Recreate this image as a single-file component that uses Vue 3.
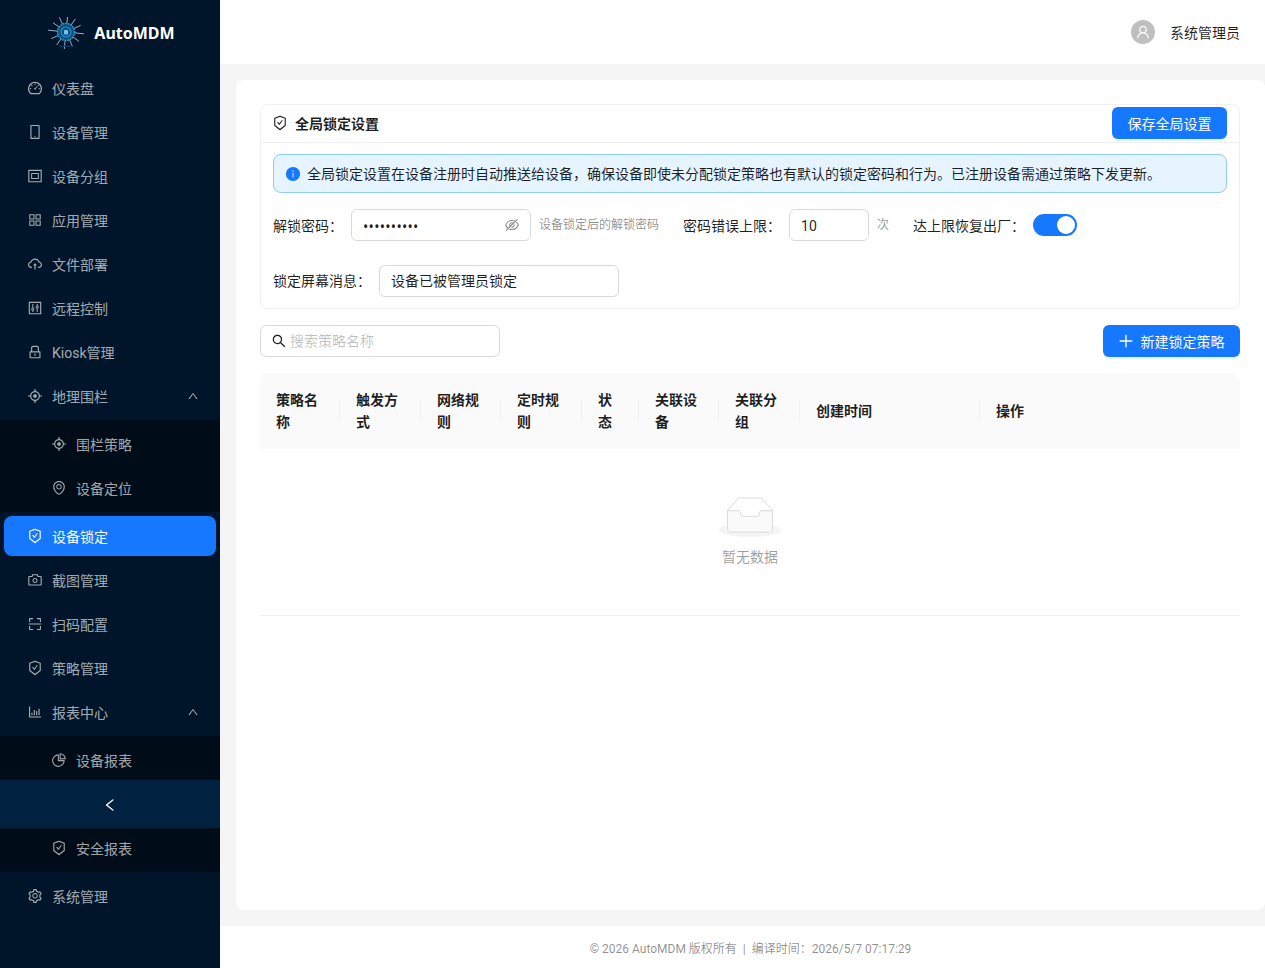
<script setup>
import { ref } from 'vue';

const icons = {
  dashboard: 'M924.8 385.6a446.7 446.7 0 00-96-142.4 446.7 446.7 0 00-142.4-96C631.1 123.8 572.5 112 512 112s-119.1 11.8-174.4 35.2a446.7 446.7 0 00-142.4 96 446.7 446.7 0 00-96 142.4C75.8 440.9 64 499.5 64 560c0 132.7 58.3 257.7 159.9 343.1l1.7 1.4c5.8 4.8 13.1 7.5 20.6 7.5h531.7c7.5 0 14.8-2.7 20.6-7.5l1.7-1.4C901.7 817.7 960 692.7 960 560c0-60.5-11.9-119.1-35.2-174.4zM761.4 836H262.6A371.12 371.12 0 01140 560c0-99.4 38.7-192.8 109-263 70.3-70.3 163.7-109 263-109 99.4 0 192.8 38.7 263 109 70.3 70.3 109 163.7 109 263 0 105.6-44.5 205.5-122.6 276zM623.5 421.5a8.03 8.03 0 00-11.3 0L527.7 506c-18.7-5-39.4-.2-54.1 14.5a55.95 55.95 0 000 79.2 55.95 55.95 0 0079.2 0 55.87 55.87 0 0014.5-54.1l84.5-84.5c3.1-3.1 3.1-8.2 0-11.3l-28.3-28.3zM490 320h44c4.4 0 8-3.6 8-8v-80c0-4.4-3.6-8-8-8h-44c-4.4 0-8 3.6-8 8v80c0 4.4 3.6 8 8 8zm260 218v44c0 4.4 3.6 8 8 8h80c4.4 0 8-3.6 8-8v-44c0-4.4-3.6-8-8-8h-80c-4.4 0-8 3.6-8 8zm12.7-197.2l-31.1-31.1a8.03 8.03 0 00-11.3 0l-56.6 56.6a8.03 8.03 0 000 11.3l31.1 31.1c3.1 3.1 8.2 3.1 11.3 0l56.6-56.6c3.1-3.1 3.1-8.2 0-11.3zm-458.6-31.1a8.03 8.03 0 00-11.3 0l-31.1 31.1a8.03 8.03 0 000 11.3l56.6 56.6c3.1 3.1 8.2 3.1 11.3 0l31.1-31.1c3.1-3.1 3.1-8.2 0-11.3l-56.6-56.6zM262 530h-80c-4.4 0-8 3.6-8 8v44c0 4.4 3.6 8 8 8h80c4.4 0 8-3.6 8-8v-44c0-4.4-3.6-8-8-8z',
  mobile: 'M744 62H280c-35.3 0-64 28.7-64 64v768c0 35.3 28.7 64 64 64h464c35.3 0 64-28.7 64-64V126c0-35.3-28.7-64-64-64zm-8 824H288V134h448v752zM472 784a40 40 0 1080 0 40 40 0 10-80 0z',
  group: 'M80 112h864v800H80z M152 184v656h720V184z M264 320h496v384H264z M328 384v256h368V384z',
  appstore: 'M464 144H160c-8.8 0-16 7.2-16 16v304c0 8.8 7.2 16 16 16h304c8.8 0 16-7.2 16-16V160c0-8.8-7.2-16-16-16zm-52 268H212V212h200v200zm452-268H560c-8.8 0-16 7.2-16 16v304c0 8.8 7.2 16 16 16h304c8.8 0 16-7.2 16-16V160c0-8.8-7.2-16-16-16zm-52 268H612V212h200v200zM464 544H160c-8.8 0-16 7.2-16 16v304c0 8.8 7.2 16 16 16h304c8.8 0 16-7.2 16-16V560c0-8.8-7.2-16-16-16zm-52 268H212V612h200v200zm452-268H560c-8.8 0-16 7.2-16 16v304c0 8.8 7.2 16 16 16h304c8.8 0 16-7.2 16-16V560c0-8.8-7.2-16-16-16zm-52 268H612V612h200v200z',
  cloud: 'M518.3 459a8 8 0 00-12.6 0l-112 141.7a7.98 7.98 0 006.3 12.9h73.9V856c0 4.4 3.6 8 8 8h60c4.4 0 8-3.6 8-8V613.7H624c6.7 0 10.4-7.7 6.3-12.9L518.3 459z M811.4 366.7C765.6 245.9 648.9 160 512.2 160S258.8 245.8 213 366.6C127.3 389.1 64 467.2 64 560c0 110.5 89.5 200 199.9 200H304c4.4 0 8-3.6 8-8v-60c0-4.4-3.6-8-8-8h-40.1c-33.7 0-65.4-13.4-89-37.7-23.5-24.2-36-56.8-34.9-90.6.9-26.4 9.9-51.2 26.2-72.1 16.7-21.3 40.1-36.8 66.1-43.7l37.9-9.9 13.9-36.6c8.6-22.8 20.6-44.1 35.7-63.4a245.6 245.6 0 0152.4-49.9c41.1-28.9 89.5-44.2 140-44.2s98.9 15.3 140 44.2c19.9 14 37.5 30.8 52.4 49.9 15.1 19.3 27.1 40.6 35.7 63.4l13.8 36.5 37.8 10C846.1 454.5 884 503.8 884 560c0 33.1-12.9 64.3-36.3 87.7a123.07 123.07 0 01-87.6 36.3H720c-4.4 0-8 3.6-8 8v60c0 4.4 3.6 8 8 8h40.1C870.5 760 960 670.5 960 560c0-92.7-63.1-170.7-148.6-193.3z',
  control: 'M112 112h800v800H112z M184 184v656h656V184z M340 256h64v229h-64z M340 683h64v85h-64z M372 485a99 99 0 100 198 99 99 0 100-198z M372 544a40 40 0 010 80 40 40 0 010-80z M620 256h64v85h-64z M620 539h64v229h-64z M652 341a99 99 0 100 198 99 99 0 100-198z M652 400a40 40 0 010 80 40 40 0 010-80z',
  lock: 'M832 464h-68V240c0-70.7-57.3-128-128-128H388c-70.7 0-128 57.3-128 128v224h-68c-17.7 0-32 14.3-32 32v384c0 17.7 14.3 32 32 32h640c17.7 0 32-14.3 32-32V496c0-17.7-14.3-32-32-32zM332 240c0-30.9 25.1-56 56-56h248c30.9 0 56 25.1 56 56v224H332V240zm460 600H232V536h560v304zM484 701v53c0 4.4 3.6 8 8 8h40c4.4 0 8-3.6 8-8v-53a48.01 48.01 0 10-56 0z',
  aim: 'M952 474H829.8C812.5 327.6 696.4 211.5 550 194.2V72c0-4.4-3.6-8-8-8h-60c-4.4 0-8 3.6-8 8v122.2C327.6 211.5 211.5 327.6 194.2 474H72c-4.4 0-8 3.6-8 8v60c0 4.4 3.6 8 8 8h122.2C211.5 696.4 327.6 812.5 474 829.8V952c0 4.4 3.6 8 8 8h60c4.4 0 8-3.6 8-8V829.8C696.4 812.5 812.5 696.4 829.8 550H952c4.4 0 8-3.6 8-8v-60c0-4.4-3.6-8-8-8zM512 756c-134.8 0-244-109.2-244-244s109.2-244 244-244 244 109.2 244 244-109.2 244-244 244z M512 392c-32.1 0-62.1 12.4-84.8 35.2-22.7 22.7-35.2 52.7-35.2 84.8s12.5 62.1 35.2 84.8C449.9 619.4 480 632 512 632s62.1-12.5 84.8-35.2C619.4 574.1 632 544 632 512s-12.5-62.1-35.2-84.8A118.57 118.57 0 00512 392z',
  environment: 'M854.6 289.1a362.49 362.49 0 00-79.9-115.7 370.83 370.83 0 00-118.2-77.8C610.7 76.6 562.1 67 512 67c-50.1 0-98.7 9.6-144.5 28.5-44.3 18.3-84 44.5-118.2 77.8A363.6 363.6 0 00169.4 289c-19.5 45-29.4 92.8-29.4 142 0 70.6 16.9 140.9 50.1 208.7 26.7 54.5 64 107.6 111 158.1 80.3 86.2 164.5 138.9 188.4 153a43.9 43.9 0 0022.4 6.1c7.8 0 15.5-2 22.4-6.1 23.9-14.1 108.1-66.8 188.4-153 47-50.4 84.3-103.6 111-158.1C867.1 572 884 501.8 884 431.1c0-49.2-9.9-97-29.4-142zM512 880.2c-65.9-41.9-300-207.8-300-449.1 0-77.9 31.1-151.1 87.6-206.3C356.3 169.5 431.7 139 512 139s155.7 30.5 212.4 85.9C780.9 280 812 353.2 812 431.1c0 241.3-234.1 407.2-300 449.1zm0-617.2c-97.2 0-176 78.8-176 176s78.8 176 176 176 176-78.8 176-176-78.8-176-176-176zm79.2 255.2A111.6 111.6 0 01512 551c-29.9 0-58-11.7-79.2-32.8A111.6 111.6 0 01400 439c0-29.9 11.7-58 32.8-79.2C454 338.6 482.1 327 512 327c29.9 0 58 11.6 79.2 32.8C612.4 381 624 409.1 624 439c0 29.9-11.6 58-32.8 79.2z',
  safety: 'M866.9 169.9L527.1 54.1C523 52.7 517.5 52 512 52s-11 .7-15.1 2.1L157.1 169.9c-8.3 2.8-15.1 12.4-15.1 21.2v482.4c0 8.8 5.7 20.4 12.6 25.9L499.3 968c3.5 2.7 8 4.1 12.6 4.1s9.2-1.4 12.6-4.1l344.7-268.6c6.9-5.4 12.6-17 12.6-25.9V191.1c.2-8.8-6.6-18.3-14.9-21.2zM810 654.3L512 886.5 214 654.3V226.7l298-101.6 298 101.6v427.6zm-405.8-201c-3-4.1-7.8-6.6-13-6.6H336c-6.5 0-10.3 7.4-6.5 12.7l126.4 174a16.1 16.1 0 0026 0l212.6-292.7c3.8-5.3 0-12.7-6.5-12.7h-55.2c-5.1 0-10 2.5-13 6.6L468.9 542.4l-64.7-89.1z',
  camera: 'M864 248H728l-32.4-90.8a32.07 32.07 0 00-30.2-21.2H358.6c-13.5 0-25.6 8.5-30.1 21.2L296 248H160c-44.2 0-80 35.8-80 80v456c0 44.2 35.8 80 80 80h704c44.2 0 80-35.8 80-80V328c0-44.2-35.8-80-80-80zm8 536c0 4.4-3.6 8-8 8H160c-4.4 0-8-3.6-8-8V328c0-4.4 3.6-8 8-8h186.7l17.1-47.8 22.9-64.2h250.5l22.9 64.2 17.1 47.8H864c4.4 0 8 3.6 8 8v456zM512 384c-88.4 0-160 71.6-160 160s71.6 160 160 160 160-71.6 160-160-71.6-160-160-160zm0 256c-53 0-96-43-96-96s43-96 96-96 96 43 96 96-43 96-96 96z',
  scan: 'M136 384h56c4.4 0 8-3.6 8-8V200h176c4.4 0 8-3.6 8-8v-56c0-4.4-3.6-8-8-8H196c-37.6 0-68 30.4-68 68v180c0 4.4 3.6 8 8 8zm512-184h176v176c0 4.4 3.6 8 8 8h56c4.4 0 8-3.6 8-8V196c0-37.6-30.4-68-68-68H648c-4.4 0-8 3.6-8 8v56c0 4.4 3.6 8 8 8zM376 824H200V648c0-4.4-3.6-8-8-8h-56c-4.4 0-8 3.6-8 8v180c0 37.6 30.4 68 68 68h180c4.4 0 8-3.6 8-8v-56c0-4.4-3.6-8-8-8zm512-184h-56c-4.4 0-8 3.6-8 8v176H648c-4.4 0-8 3.6-8 8v56c0 4.4 3.6 8 8 8h180c37.6 0 68-30.4 68-68V648c0-4.4-3.6-8-8-8zm16-164H120c-4.4 0-8 3.6-8 8v56c0 4.4 3.6 8 8 8h784c4.4 0 8-3.6 8-8v-56c0-4.4-3.6-8-8-8z',
  bar: 'M888 792H200V168c0-4.4-3.6-8-8-8h-56c-4.4 0-8 3.6-8 8v688c0 4.4 3.6 8 8 8h752c4.4 0 8-3.6 8-8v-56c0-4.4-3.6-8-8-8zm-600-80h56c4.4 0 8-3.6 8-8V560c0-4.4-3.6-8-8-8h-56c-4.4 0-8 3.6-8 8v144c0 4.4 3.6 8 8 8zm152 0h56c4.4 0 8-3.6 8-8V384c0-4.4-3.6-8-8-8h-56c-4.4 0-8 3.6-8 8v320c0 4.4 3.6 8 8 8zm152 0h56c4.4 0 8-3.6 8-8V462c0-4.4-3.6-8-8-8h-56c-4.4 0-8 3.6-8 8v242c0 4.4 3.6 8 8 8zm152 0h56c4.4 0 8-3.6 8-8V304c0-4.4-3.6-8-8-8h-56c-4.4 0-8 3.6-8 8v400c0 4.4 3.6 8 8 8z',
  pie: 'M864 518H506V160c0-4.4-3.6-8-8-8h-26a398.46 398.46 0 00-282.8 117.1 398.19 398.19 0 00-85.7 127.1A397.61 397.61 0 0072 552a398.46 398.46 0 00117.1 282.8c36.7 36.7 79.5 65.6 127.1 85.7A397.61 397.61 0 00472 952a398.46 398.46 0 00282.8-117.1c36.7-36.7 65.6-79.5 85.7-127.1A397.61 397.61 0 00872 552v-26c0-4.4-3.6-8-8-8zM705.7 787.8A331.59 331.59 0 01470.4 884c-88.1-.4-170.9-34.9-233.2-97.2C174.5 724.1 140 640.7 140 552c0-88.7 34.5-172.1 97.2-234.8 54.6-54.6 124.9-87.9 200.8-95.5V586h364.3c-7.7 76.3-41.3 147-96.6 201.8zM952 462.4l-2.6-28.2c-8.5-92.1-49.4-179-115.2-244.6A399.4 399.4 0 00589 74.6L560.7 72c-4.7-.4-8.7 3.2-8.7 7.9V464c0 4.4 3.6 8 8 8l384-1c4.7 0 8.4-4 8-8.6zm-332.2-58.2V147.6a332.24 332.24 0 01166.4 89.8c45.7 45.6 77 103.6 90 166.1l-256.4.7z',
  setting: 'M924.8 625.7l-65.5-56c3.1-19 4.7-38.4 4.7-57.8s-1.6-38.8-4.7-57.8l65.5-56a32.03 32.03 0 009.3-35.2l-.9-2.6a443.74 443.74 0 00-79.7-137.9l-1.8-2.1a32.12 32.12 0 00-35.1-9.5l-81.3 28.9c-30-24.6-63.5-44-99.7-57.6l-15.7-85a32.05 32.05 0 00-25.8-25.7l-2.7-.5c-52.1-9.4-106.9-9.4-159 0l-2.7.5a32.05 32.05 0 00-25.8 25.7l-15.8 85.4a351.86 351.86 0 00-99 57.4l-81.9-29.1a32 32 0 00-35.1 9.5l-1.8 2.1a446.02 446.02 0 00-79.7 137.9l-.9 2.6c-4.5 12.5-.8 26.5 9.3 35.2l66.3 56.6c-3.1 18.8-4.6 38-4.6 57.1 0 19.2 1.5 38.4 4.6 57.1L99 625.5a32.03 32.03 0 00-9.3 35.2l.9 2.6c18.1 50.4 44.9 96.9 79.7 137.9l1.8 2.1a32.12 32.12 0 0035.1 9.5l81.9-29.1c29.8 24.5 63.1 43.9 99 57.4l15.8 85.4a32.05 32.05 0 0025.8 25.7l2.7.5a449.4 449.4 0 00159 0l2.7-.5a32.05 32.05 0 0025.8-25.7l15.7-85a350 350 0 0099.7-57.6l81.3 28.9a32 32 0 0035.1-9.5l1.8-2.1c34.8-41.1 61.6-87.5 79.7-137.9l.9-2.6c4.5-12.3.8-26.3-9.3-35zM788.3 465.9c2.5 15.1 3.8 30.6 3.8 46.1s-1.3 31-3.8 46.1l-6.6 40.1 74.7 63.9a370.03 370.03 0 01-42.6 73.6L721 702.8l-31.4 25.8c-23.9 19.6-50.5 35-79.3 45.8l-38.1 14.3-17.9 97a377.5 377.5 0 01-85 0l-17.9-97.2-37.8-14.5c-28.5-10.8-55-26.2-78.7-45.7l-31.4-25.9-93.4 33.2c-17-22.9-31.2-47.6-42.6-73.6l75.5-64.5-6.5-40c-2.4-14.9-3.7-30.3-3.7-45.5 0-15.3 1.2-30.6 3.7-45.5l6.5-40-75.5-64.5c11.3-26.1 25.6-50.7 42.6-73.6l93.4 33.2 31.4-25.9c23.7-19.5 50.2-34.9 78.7-45.7l37.9-14.3 17.9-97.2c28.1-3.2 56.8-3.2 85 0l17.9 97 38.1 14.3c28.7 10.8 55.4 26.2 79.3 45.8l31.4 25.8 92.8-32.9c17 22.9 31.2 47.6 42.6 73.6L781.8 426l6.5 39.9zM512 326c-97.2 0-176 78.8-176 176s78.8 176 176 176 176-78.8 176-176-78.8-176-176-176zm79.2 255.2A111.6 111.6 0 01512 614c-29.9 0-58-11.7-79.2-32.8A111.6 111.6 0 01400 502c0-29.9 11.7-58 32.8-79.2C454 401.6 482.1 390 512 390c29.9 0 58 11.6 79.2 32.8A111.6 111.6 0 01624 502c0 29.9-11.7 58-32.8 79.2z',
  eyeOff: 'M942.2 486.2Q889.47 375.11 816.7 305l-50.88 50.88C807.31 395.53 843.45 447.4 874.7 512 791.5 684.2 673.4 766 512 766q-72.67 0-133.87-22.38L323 798.75Q408 838 512 838q288.3 0 430.2-300.3a60.29 60.29 0 000-51.5zm-63.57-320.64L836 122.88a8 8 0 00-11.32 0L715.31 232.2Q624.86 186 512 186q-288.3 0-430.2 300.3a60.3 60.3 0 000 51.5q56.69 119.4 136.5 191.41L112.48 835a8 8 0 000 11.31L155.17 889a8 8 0 0011.31 0l712.15-712.12a8 8 0 000-11.32zM149.3 512C232.6 339.8 350.7 258 512 258c54.54 0 104.13 9.36 149.12 28.39l-70.3 70.3a176 176 0 00-238.13 238.13l-83.42 83.42C223.1 637.49 183.3 582.28 149.3 512zm246.7 0a112.11 112.11 0 01146.2-106.69L401.31 546.2A112 112 0 01396 512z M508 624c-3.46 0-6.87-.16-10.25-.47l-52.82 52.82a176.09 176.09 0 00227.42-227.42l-52.82 52.82c.31 3.38.47 6.79.47 10.25a111.94 111.94 0 01-112 112z',
  search: 'M909.6 854.5L649.9 594.8C690.2 542.7 712 479 712 412c0-80.2-31.3-155.4-87.9-212.1-56.6-56.7-132-87.9-212.1-87.9s-155.5 31.3-212.1 87.9C143.2 256.5 112 331.8 112 412c0 80.1 31.3 155.5 87.9 212.1C256.5 680.8 331.8 712 412 712c67 0 130.6-21.8 182.7-62l259.7 259.6a8.2 8.2 0 0011.6 0l43.6-43.5a8.2 8.2 0 000-11.6zM570.4 570.4C528 612.7 471.8 636 412 636s-116-23.3-158.4-65.6C211.3 528 188 471.8 188 412s23.3-116.1 65.6-158.4C296 211.3 352.2 188 412 188s116.1 23.2 158.4 65.6S636 352.2 636 412s-23.3 116.1-65.6 158.4z',
  plus: 'M482 152h60q8 0 8 8v704q0 8-8 8h-60q-8 0-8-8V160q0-8 8-8z M160 474h704q8 0 8 8v60q0 8-8 8H160q-8 0-8-8v-60q0-8 8-8z',
  user: 'M858.5 763.6a374 374 0 00-80.6-119.5 375.63 375.63 0 00-119.5-80.6c-.4-.2-.8-.3-1.2-.5C719.5 518 760 444.7 760 362c0-137-111-248-248-248S264 225 264 362c0 82.7 40.5 156 102.8 201.1-.4.2-.8.3-1.2.5-44.8 18.9-85 46-119.5 80.6a375.63 375.63 0 00-80.6 119.5A371.7 371.7 0 00136 901.8a8 8 0 008 8.2h60c4.4 0 7.9-3.5 8-7.8 2-77.2 33-149.5 87.8-204.3 56.7-56.7 132-87.9 212.2-87.9s155.5 31.2 212.2 87.9C779 752.7 810 825 812 902.2c.1 4.4 3.6 7.8 8 7.8h60a8 8 0 008-8.2c-1-47.8-10.9-94.3-29.5-138.2zM512 534c-45.9 0-89.1-17.9-121.6-50.4S340 407.9 340 362c0-45.9 17.9-89.1 50.4-121.6S466.1 190 512 190s89.1 17.9 121.6 50.4S684 316.1 684 362c0 45.9-17.9 89.1-50.4 121.6S557.9 534 512 534z',
  up: 'M890.5 755.3L537.9 269.2c-12.8-17.6-39-17.6-51.7 0L133.5 755.3A8 8 0 00140 768h75c5.1 0 9.9-2.5 12.9-6.6L512 369.8l284.1 391.6c3 4.1 7.8 6.6 12.9 6.6h75c6.5 0 10.3-7.4 6.5-12.7z',
  left: 'M724 218.3V141c0-6.7-7.7-10.4-12.9-6.3L260.3 486.8a31.86 31.86 0 000 50.3l450.8 352.1c5.3 4.1 12.9.4 12.9-6.3v-77.3c0-4.9-2.3-9.6-6.1-12.6l-360-281 360-281.1c3.8-3 6.1-7.7 6.1-12.6z',
  info: 'M512 64C264.6 64 64 264.6 64 512s200.6 448 448 448 448-200.6 448-448S759.4 64 512 64zm32 664c0 4.4-3.6 8-8 8h-48c-4.4 0-8-3.6-8-8V456c0-4.4 3.6-8 8-8h48c4.4 0 8 3.6 8 8v272zm-32-344a48.01 48.01 0 010-96 48.01 48.01 0 010 96z'
};

const menu = [
  { label: '仪表盘', icon: 'dashboard' },
  { label: '设备管理', icon: 'mobile' },
  { label: '设备分组', icon: 'group' },
  { label: '应用管理', icon: 'appstore' },
  { label: '文件部署', icon: 'cloud' },
  { label: '远程控制', icon: 'control' },
  { label: 'Kiosk管理', icon: 'lock' },
  {
    label: '地理围栏',
    icon: 'aim',
    children: [
      { label: '围栏策略', icon: 'aim' },
      { label: '设备定位', icon: 'environment' }
    ]
  },
  { label: '设备锁定', icon: 'safety', active: true },
  { label: '截图管理', icon: 'camera' },
  { label: '扫码配置', icon: 'scan' },
  { label: '策略管理', icon: 'safety' },
  {
    label: '报表中心',
    icon: 'bar',
    children: [
      { label: '设备报表', icon: 'pie' },
      // this row sits under the collapse trigger
      { label: '', icon: '' },
      { label: '安全报表', icon: 'safety' }
    ]
  },
  { label: '系统管理', icon: 'setting' }
];

const columns = [
  { title: '策略名称', width: 80 },
  { title: '触发方式', width: 81 },
  { title: '网络规则', width: 80 },
  { title: '定时规则', width: 81 },
  { title: '状态', width: 57 },
  { title: '关联设备', width: 80 },
  { title: '关联分组', width: 81 },
  { title: '创建时间', width: 180 },
  { title: '操作', width: 260 }
];

// logo spokes
const spokes = Array.from({ length: 12 }, (_, i) => {
  const a = (i * Math.PI) / 6 + 0.1;
  const long = i % 3 === 0 ? 18 : 16;
  return {
    x1: 18 + Math.cos(a) * 8,
    y1: 15 + Math.sin(a) * 8,
    x2: 18 + Math.cos(a) * long,
    y2: 15 + Math.sin(a) * long
  };
});

const password = ref('1234567890');
const maxAttempts = ref('10');
const lockMessage = ref('设备已被管理员锁定');
const keyword = ref('');
const wipeOnLimit = ref(true);
</script>

<template>
  <div class="layout">
    <aside class="sider">
      <div class="logo">
        <svg class="logo-mark" viewBox="0 0 36 32" width="36" height="32">
          <line
            v-for="(s, i) in spokes"
            :key="i"
            :x1="s.x1"
            :y1="s.y1"
            :x2="s.x2"
            :y2="s.y2"
            stroke="#a9c4d4"
            stroke-width="0.9"
          />
          <circle cx="18" cy="15" r="9" fill="#0d4f7c" />
          <circle cx="18" cy="15" r="8.5" fill="none" stroke="#37a3d8" stroke-width="1.4" stroke-dasharray="1.6 1" />
          <circle cx="18" cy="15" r="5" fill="none" stroke="#2b8fc4" stroke-width="1.2" />
          <rect x="16" y="13" width="4" height="4.4" rx="0.6" fill="#6cc4ec" />
          <rect x="11" y="28.5" width="14" height="1.4" fill="#0b3a60" />
        </svg>
        <span class="logo-text">AutoMDM</span>
      </div>

      <ul class="menu">
        <li v-for="item in menu" :key="item.label">
          <div class="menu-item" :class="{ active: item.active }">
            <svg class="icon" viewBox="0 0 1024 1024"><path :d="icons[item.icon]" /></svg>
            <span class="menu-label">{{ item.label }}</span>
            <svg v-if="item.children" class="arrow" viewBox="0 0 1024 1024"><path :d="icons.up" /></svg>
          </div>
          <ul v-if="item.children" class="submenu">
            <li v-for="(child, i) in item.children" :key="i" class="menu-item sub-item">
              <svg v-if="child.icon" class="icon" viewBox="0 0 1024 1024"><path :d="icons[child.icon]" /></svg>
              <span class="menu-label">{{ child.label }}</span>
            </li>
          </ul>
        </li>
      </ul>

      <div class="trigger">
        <svg class="icon" viewBox="0 0 1024 1024"><path :d="icons.left" /></svg>
      </div>
    </aside>

    <div class="main">
      <header class="topbar">
        <span class="avatar">
          <svg class="icon" viewBox="0 0 1024 1024"><path :d="icons.user" /></svg>
        </span>
        <span class="username">系统管理员</span>
      </header>

      <main class="content">
        <div class="panel">
          <section class="settings">
            <div class="settings-head">
              <div class="settings-title">
                <svg class="icon" viewBox="0 0 1024 1024"><path :d="icons.safety" /></svg>
                <span>全局锁定设置</span>
              </div>
              <button class="btn"><span>保存全局设置</span></button>
            </div>
            <div class="settings-body">
              <div class="alert">
                <svg class="icon" viewBox="0 0 1024 1024"><path :d="icons.info" /></svg>
                <span>全局锁定设置在设备注册时自动推送给设备，确保设备即使未分配锁定策略也有默认的锁定密码和行为。已注册设备需通过策略下发更新。</span>
              </div>

              <div class="form-row">
                <div class="field">
                  <label>解锁密码：</label>
                  <div class="input password">
                    <input v-model="password" type="password" />
                    <svg class="icon" viewBox="0 0 1024 1024"><path :d="icons.eyeOff" /></svg>
                  </div>
                  <span class="hint">设备锁定后的解锁密码</span>
                </div>
                <div class="field">
                  <label>密码错误上限：</label>
                  <div class="input number">
                    <input v-model="maxAttempts" />
                  </div>
                  <span class="hint">次</span>
                </div>
                <div class="field">
                  <label>达上限恢复出厂：</label>
                  <button class="switch" :class="{ on: wipeOnLimit }" @click="wipeOnLimit = !wipeOnLimit"></button>
                </div>
              </div>

              <div class="form-row">
                <div class="field">
                  <label class="message-label">锁定屏幕消息：</label>
                  <div class="input message">
                    <input v-model="lockMessage" />
                  </div>
                </div>
              </div>
            </div>
          </section>

          <div class="toolbar">
            <div class="input search">
              <svg class="icon" viewBox="0 0 1024 1024"><path :d="icons.search" /></svg>
              <input v-model="keyword" placeholder="搜索策略名称" />
            </div>
            <button class="btn">
              <svg class="icon plus" viewBox="0 0 1024 1024"><path :d="icons.plus" /></svg>
              <span>新建锁定策略</span>
            </button>
          </div>

          <table class="table">
            <colgroup>
              <col v-for="col in columns" :key="col.title" :style="{ width: col.width + 'px' }" />
            </colgroup>
            <thead>
              <tr>
                <th v-for="col in columns" :key="col.title">{{ col.title }}</th>
              </tr>
            </thead>
            <tbody>
              <tr>
                <td :colspan="columns.length">
                  <div class="empty">
                    <svg width="64" height="41" viewBox="0 0 64 41">
                      <g transform="translate(0 1)" fill="none" fill-rule="evenodd">
                        <ellipse fill="#f5f5f5" cx="32" cy="33" rx="32" ry="7" />
                        <g fill-rule="nonzero" stroke="#d9d9d9">
                          <path d="M55 12.76L44.854 1.258C44.367.474 43.656 0 42.907 0H21.093c-.749 0-1.46.474-1.947 1.257L9 12.761V22h46v-9.24z" />
                          <path d="M41.613 15.931c0-1.605.994-2.93 2.227-2.931H55v18.137C55 33.26 53.68 35 52.05 35h-40.1C10.32 35 9 33.259 9 31.137V13h11.16c1.233 0 2.227 1.323 2.227 2.928v.022c0 1.605 1.005 2.901 2.237 2.901h14.752c1.232 0 2.237-1.308 2.237-2.913v-.007z" fill="#fafafa" />
                        </g>
                      </g>
                    </svg>
                    <div class="empty-text">暂无数据</div>
                  </div>
                </td>
              </tr>
            </tbody>
          </table>
        </div>
      </main>

      <footer class="footer">© 2026 AutoMDM 版权所有 &nbsp;|&nbsp; 编译时间：2026/5/7 07:17:29</footer>
    </div>
  </div>
</template>

<style>
html, body {
  margin: 0;
  overflow: hidden;
}
</style>

<style scoped>
.layout {
  display: flex;
  height: 968px;
  font-family: Roboto, "Noto Sans CJK SC", sans-serif;
  font-size: 14px;
  line-height: 22px;
  color: rgba(0, 0, 0, 0.88);
}

.icon {
  width: 16px;
  height: 16px;
  fill: currentColor;
  flex: none;
}

ul {
  list-style: none;
  margin: 0;
  padding: 0;
}

/* sidebar */
.sider {
  position: relative;
  width: 220px;
  flex: none;
  background: #001529;
  overflow: hidden;
}

.logo {
  height: 64px;
  display: flex;
  align-items: center;
  justify-content: center;
  gap: 10px;
  padding-left: 3px;
}

.logo-mark {
  margin-top: 2px;
}

.logo-text {
  margin-top: 2px;
  color: #fff;
  font-family: "Noto Sans", sans-serif;
  font-size: 16px;
  font-weight: 700;
}

.menu {
  padding-top: 4px;
}

.menu-item {
  height: 40px;
  margin: 4px;
  padding-left: 23px;
  padding-right: 17px;
  display: flex;
  align-items: center;
  gap: 9px;
  border-radius: 8px;
  color: rgba(255, 255, 255, 0.65);
}

.menu > li:first-child > .menu-item {
  margin-top: 0;
}

.menu-label {
  flex: 1;
  padding-top: 2px;
}

.arrow {
  width: 12px;
  height: 12px;
  fill: currentColor;
}

.menu-item.active {
  background: #1677ff;
  color: #fff;
}

.submenu {
  background: #000c17;
  padding: 4px 0;
}

.sub-item {
  margin: 0 4px 4px;
  padding-left: 47px;
}

.submenu .sub-item:last-child {
  margin-bottom: 0;
}

.trigger {
  position: absolute;
  left: 0;
  right: 0;
  top: 780px;
  height: 48px;
  padding-top: 2px;
  box-sizing: border-box;
  background: #002140;
  color: #fff;
  display: flex;
  align-items: center;
  justify-content: center;
}

/* right side */
.main {
  flex: 1;
  min-width: 0;
  display: flex;
  flex-direction: column;
  background: #f5f5f5;
}

.topbar {
  height: 64px;
  flex: none;
  background: #fff;
  display: flex;
  align-items: center;
  justify-content: flex-end;
  gap: 15px;
  padding-right: 25px;
}

.username {
  padding-top: 2px;
}

.avatar {
  width: 24px;
  height: 24px;
  border-radius: 50%;
  background: #bfbfbf;
  color: #fff;
  display: flex;
  align-items: center;
  justify-content: center;
}

.content {
  flex: 1;
  min-height: 0;
  padding: 16px 0 16px 16px;
}

.panel {
  height: 100%;
  box-sizing: border-box;
  background: #fff;
  border-radius: 8px;
  padding: 24px 25px 24px 24px;
}

.settings {
  border: 1px solid #f0f0f0;
  border-radius: 8px;
}

.settings-head {
  height: 36px;
  display: flex;
  align-items: center;
  justify-content: space-between;
  padding: 0 12px 1px;
  border-bottom: 1px solid #f0f0f0;
}

.settings-title {
  display: flex;
  align-items: center;
  gap: 7px;
  font-weight: 600;
}

.settings-title span {
  padding-top: 2px;
}

.settings-title .icon {
  margin-left: -1px;
}

.settings-body {
  padding: 11px 12px;
}

.btn {
  height: 32px;
  padding: 0 15.5px;
  border: none;
  border-radius: 6px;
  background: #1677ff;
  color: #fff;
  font: inherit;
  display: inline-flex;
  align-items: center;
  gap: 6px;
  box-shadow: 0 2px 0 rgba(5, 145, 255, 0.1);
  cursor: pointer;
}

.btn span {
  padding-top: 2px;
}

.btn .plus {
  width: 18px;
  height: 18px;
  margin-left: -2px;
}

.alert {
  display: flex;
  align-items: center;
  gap: 6px;
  padding: 7.5px 12px;
  margin-bottom: 16px;
  background: #e6f4ff;
  border: 1px solid #91caff;
  border-radius: 8px;
}

.alert .icon {
  margin-left: -1px;
  color: #1677ff;
}

.form-row {
  display: flex;
  gap: 24px;
  margin-bottom: 24px;
}

.form-row:last-child {
  margin-bottom: 0;
}

.field {
  display: flex;
  align-items: center;
}

.field label {
  margin-right: 8px;
  padding-top: 2px;
}

.field .message-label {
  padding-top: 0;
}

.input {
  height: 32px;
  box-sizing: border-box;
  border: 1px solid #d9d9d9;
  border-radius: 6px;
  padding: 0 11px;
  display: flex;
  align-items: center;
  background: #fff;
}

.input input {
  flex: 1;
  min-width: 0;
  width: 100%;
  border: none;
  outline: none;
  padding: 0;
  font: inherit;
  color: inherit;
  background: transparent;
}

.input input::placeholder {
  color: rgba(0, 0, 0, 0.25);
}

.password {
  width: 180px;
}

.password input {
  padding-top: 3px;
  font-family: "Noto Sans", sans-serif;
  letter-spacing: 0.3px;
}

.password .icon {
  margin-right: -1px;
  color: rgba(0, 0, 0, 0.45);
}

.number {
  width: 80px;
}

.number input {
  padding-top: 2px;
}

.message {
  width: 240px;
}

.hint {
  margin-left: 8px;
  font-size: 12px;
  color: rgba(0, 0, 0, 0.45);
}

.switch {
  width: 44px;
  height: 22px;
  padding: 0;
  border: none;
  border-radius: 11px;
  background: rgba(0, 0, 0, 0.25);
  display: flex;
  align-items: center;
  justify-content: flex-start;
  cursor: pointer;
}

.switch::after {
  content: '';
  width: 18px;
  height: 18px;
  margin: 0 2px;
  border-radius: 50%;
  background: #fff;
}

.switch.on {
  background: #1677ff;
  justify-content: flex-end;
}

.toolbar {
  display: flex;
  justify-content: space-between;
  align-items: center;
  margin: 16px 0;
}

.search {
  width: 240px;
  gap: 3px;
}

.search .icon {
  margin-left: -1px;
}

/* table */
.table {
  width: 100%;
  table-layout: fixed;
  border-collapse: separate;
  border-spacing: 0;
}

.table th {
  position: relative;
  padding: 16px;
  background: #fafafa;
  font-weight: 600;
  text-align: left;
}

.table th:first-child {
  border-top-left-radius: 8px;
}

.table th:last-child {
  border-top-right-radius: 8px;
}

.table th:not(:last-child)::before {
  content: '';
  position: absolute;
  right: 0;
  top: 50%;
  width: 1px;
  height: 22px;
  transform: translateY(-50%);
  background: #f0f0f0;
}

.table td {
  padding: 16px;
  border-bottom: 1px solid #f0f0f0;
}

.empty {
  margin: 32px 0;
  text-align: center;
}

.empty svg {
  display: block;
  height: 40px;
  margin: 0 auto 9px;
}

.empty-text {
  margin-bottom: -1px;
  color: rgba(0, 0, 0, 0.4);
}

.footer {
  height: 42px;
  flex: none;
  box-sizing: border-box;
  padding: 3px 0 0 16px;
  background: #fff;
  display: flex;
  align-items: center;
  justify-content: center;
  font-size: 12px;
  color: rgba(0, 0, 0, 0.45);
}
</style>
